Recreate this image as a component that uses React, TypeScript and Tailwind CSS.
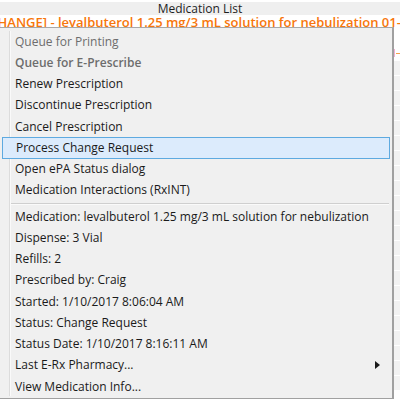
import React from 'react';

const font = { fontFamily: '"Open Sans", "Noto Sans", sans-serif' };

type Item = { label: string; disabled?: boolean; bold?: boolean; active?: boolean; submenu?: boolean };

const actions: Item[] = [
  { label: 'Queue for Printing', disabled: true },
  { label: 'Queue for E-Prescribe', disabled: true, bold: true },
  { label: 'Renew Prescription' },
  { label: 'Discontinue Prescription' },
  { label: 'Cancel Prescription' },
  { label: 'Process Change Request', active: true },
  { label: 'Open ePA Status dialog' },
  { label: 'Medication Interactions (RxINT)' },
];

const details: Item[] = [
  { label: 'Medication: levalbuterol 1.25 mg/3 mL solution for nebulization' },
  { label: 'Dispense: 3 Vial' },
  { label: 'Refills: 2' },
  { label: 'Prescribed by: Craig' },
  { label: 'Started: 1/10/2017 8:06:04 AM' },
  { label: 'Status: Change Request' },
  { label: 'Status Date: 1/10/2017 8:16:11 AM' },
  { label: 'Last E-Rx Pharmacy...', submenu: true },
  { label: 'View Medication Info...' },
];

function MenuRow({ item }: { item: Item }) {
  return (
    <div
      className={
        'flex items-center justify-between h-[21.25px] mx-[2px] pl-[13px] pr-[10px] text-[12px] whitespace-nowrap ' +
        (item.active ? 'bg-[#dcebfc] border border-[#5eaae0] pl-[12px] pr-[9px] ' : '') +
        (item.disabled ? 'text-[#6d6d6d] ' : 'text-[#1a1a1a] ') +
        (item.bold ? 'font-semibold' : '')
      }
    >
      <span>{item.label}</span>
      {item.submenu && (
        <span className="w-0 h-0 border-y-[4px] border-y-transparent border-l-[5px] border-l-[#1a1a1a]" />
      )}
    </div>
  );
}

export default function App() {
  return (
    <div className="relative w-[400px] h-[400px] overflow-hidden bg-white" style={font}>
      {/* header */}
      <div className="mt-[2px] h-[13px] bg-[#efefef] flex items-center justify-center text-[12px] text-[#1e1e1e] leading-none">
        Medication List
      </div>
      <div className="h-[12px] overflow-hidden whitespace-nowrap text-[13px] font-semibold text-[#f7760b] leading-[14px] ml-[-15px]">
        [CHANGE] - levalbuterol 1.25 mg/3 mL solution for nebulization 01-10-2017
      </div>

      {/* list rows peeking out on the right, under the menu */}
      <div className="flex flex-col gap-[1px] ml-[394px] w-[6px]">
        <div className="h-[18px] bg-white" />
        <div className="h-[14px] bg-white flex items-center gap-[1px]">
          <span className="w-[1px] h-[8px] bg-[#f0b0d0]" />
          <span className="w-[4px] h-[1px] bg-[#f7a04b]" />
        </div>
        {Array.from({ length: 22 }).map((_, i) => (
          <div key={i} className="h-[14px] bg-[#f2f2f2]" />
        ))}
      </div>

      {/* context menu */}
      <div className="absolute left-[-2px] top-[27px] w-[396px] h-[372px] bg-[#f0f0f0] border-t border-[#a8a8a8] border-r-2 border-r-[#a0a0a0] border-b border-b-[#a0a0a0]">
        <div className="absolute left-[11px] top-[3px] bottom-[2px] w-[1px] bg-[#dcdcdc]" />
        <div className="absolute left-[12px] top-[3px] bottom-[2px] w-[1px] bg-[#fafafa]" />
        <div className="relative flex flex-col pt-[3px] pl-[2px]">
          {actions.map((a) => (
            <MenuRow key={a.label} item={a} />
          ))}
          <div className="h-[5px] flex flex-col justify-center ml-[11px] mr-[3px]">
            <div className="h-[1px] bg-[#cfcfcf]" />
            <div className="h-[1px] bg-[#fafafa]" />
          </div>
          {details.map((a) => (
            <MenuRow key={a.label} item={a} />
          ))}
        </div>
      </div>
    </div>
  );
}
